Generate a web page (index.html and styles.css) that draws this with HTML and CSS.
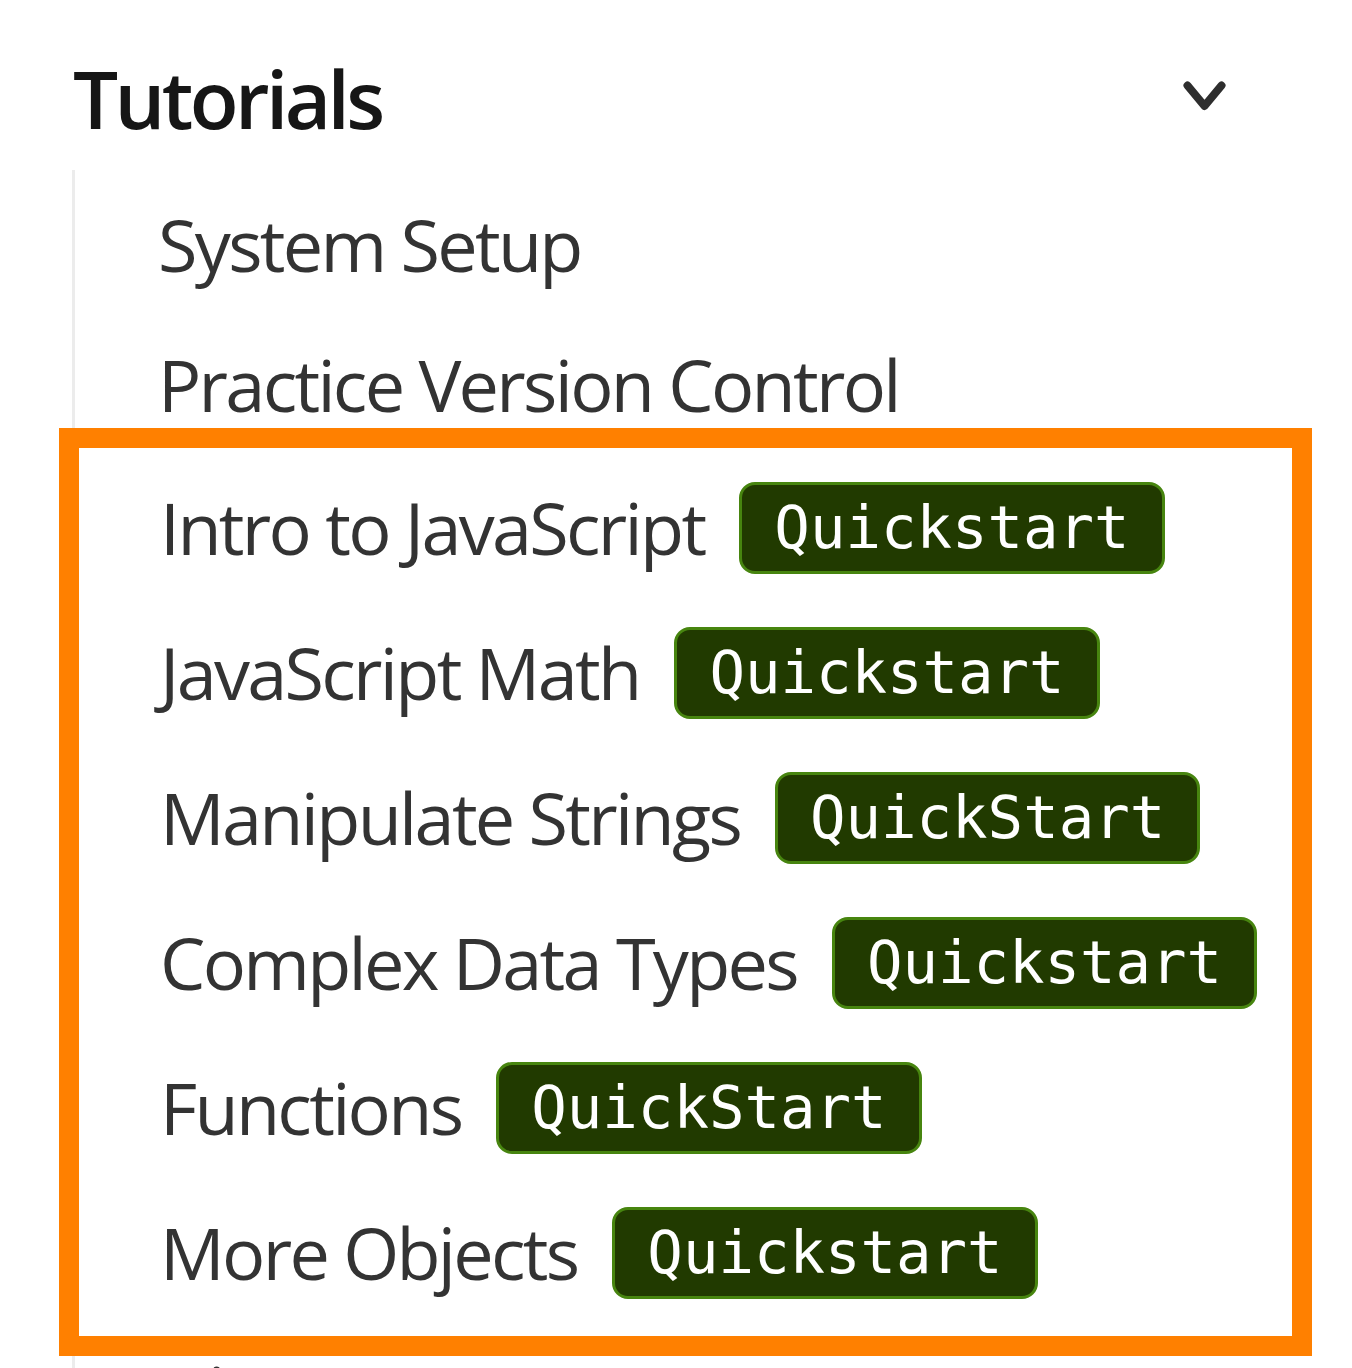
FILE: index.html
```html
<!DOCTYPE html>
<html lang="en">
<head>
<meta charset="utf-8">
<title>Tutorials</title>
<link rel="stylesheet" href="styles.css">
</head>
<body>
<nav class="sidebar">
  <div class="section-head">
    <h2 class="section-title">Tutorials</h2>
    <button class="toggle" aria-label="Collapse">
      <svg width="43" height="30" viewBox="0 0 43 30"><polyline points="4.5,4.5 21.5,25 38.5,4.5" fill="none" stroke="#2e2e2e" stroke-width="8" stroke-linecap="round" stroke-linejoin="round"/></svg>
    </button>
  </div>
  <ul class="tree">
    <li class="item"><a class="link">System Setup</a></li>
    <li class="item"><a class="link">Practice Version Control</a></li>
    <li class="group">
      <ul class="group-list">
        <li class="item badge-row"><a class="link">Intro to JavaScript</a><span class="badge">Quickstart</span></li>
        <li class="item badge-row"><a class="link">JavaScript Math</a><span class="badge">Quickstart</span></li>
        <li class="item badge-row"><a class="link">Manipulate Strings</a><span class="badge">QuickStart</span></li>
        <li class="item badge-row"><a class="link">Complex Data Types</a><span class="badge">Quickstart</span></li>
        <li class="item badge-row"><a class="link">Functions</a><span class="badge">QuickStart</span></li>
        <li class="item badge-row"><a class="link">More Objects</a><span class="badge">Quickstart</span></li>
      </ul>
    </li>
    <li class="item"><a class="link">Discover Events</a></li>
  </ul>
</nav>
</body>
</html>
```
FILE: styles.css
```css
html, body {
  margin: 0;
  padding: 0;
  background: #ffffff;
  overflow: hidden;
}

.sidebar {
  font-family: "Open Sans", "Noto Sans", sans-serif;
  padding-top: 58px;
}

.section-head {
  display: flex;
  align-items: center;
  justify-content: space-between;
  width: 1153px;
  height: 80px;
  margin-left: 73px;
  box-sizing: border-box;
}

.section-title {
  margin: 0;
  font-size: 80px;
  line-height: 80px;
  font-weight: 600;
  letter-spacing: -3.6px;
  color: #161616;
}

.toggle {
  display: flex;
  align-items: center;
  justify-content: center;
  border: 0;
  padding: 0;
  background: transparent;
  width: 43px;
  height: 30px;
  margin-bottom: 4px;
}

.tree {
  list-style: none;
  margin: 32px 0 0 72px;
  padding: 4px 0 0 0;
  border-left: 3px solid #ececec;
}

.item {
  display: flex;
  align-items: center;
  height: 140px;
  padding-left: 83px;
  box-sizing: border-box;
}

.link {
  font-size: 72px;
  line-height: 1.2;
  letter-spacing: -2.7px;
  color: #333333;
  white-space: nowrap;
}

.group {
  width: 1253px;
  box-sizing: border-box;
  margin: -26px 0 -35px -16px;
  border: 20px solid #ff8000;
  padding: 7px 0 11px 0;
  position: relative;
}

.group-list {
  list-style: none;
  margin: 0;
  padding: 0;
}

.group .item {
  padding-left: 81px;
}

.badge-row {
  height: 145px;
  gap: 35px;
}

.badge {
  font-family: "DejaVu Sans Mono", "Liberation Mono", monospace;
  font-size: 59px;
  line-height: 60px;
  color: #ffffff;
  background: #213a00;
  border: 3px solid #47850f;
  border-radius: 16px;
  padding: 13px 32px;
  white-space: nowrap;
}
```
